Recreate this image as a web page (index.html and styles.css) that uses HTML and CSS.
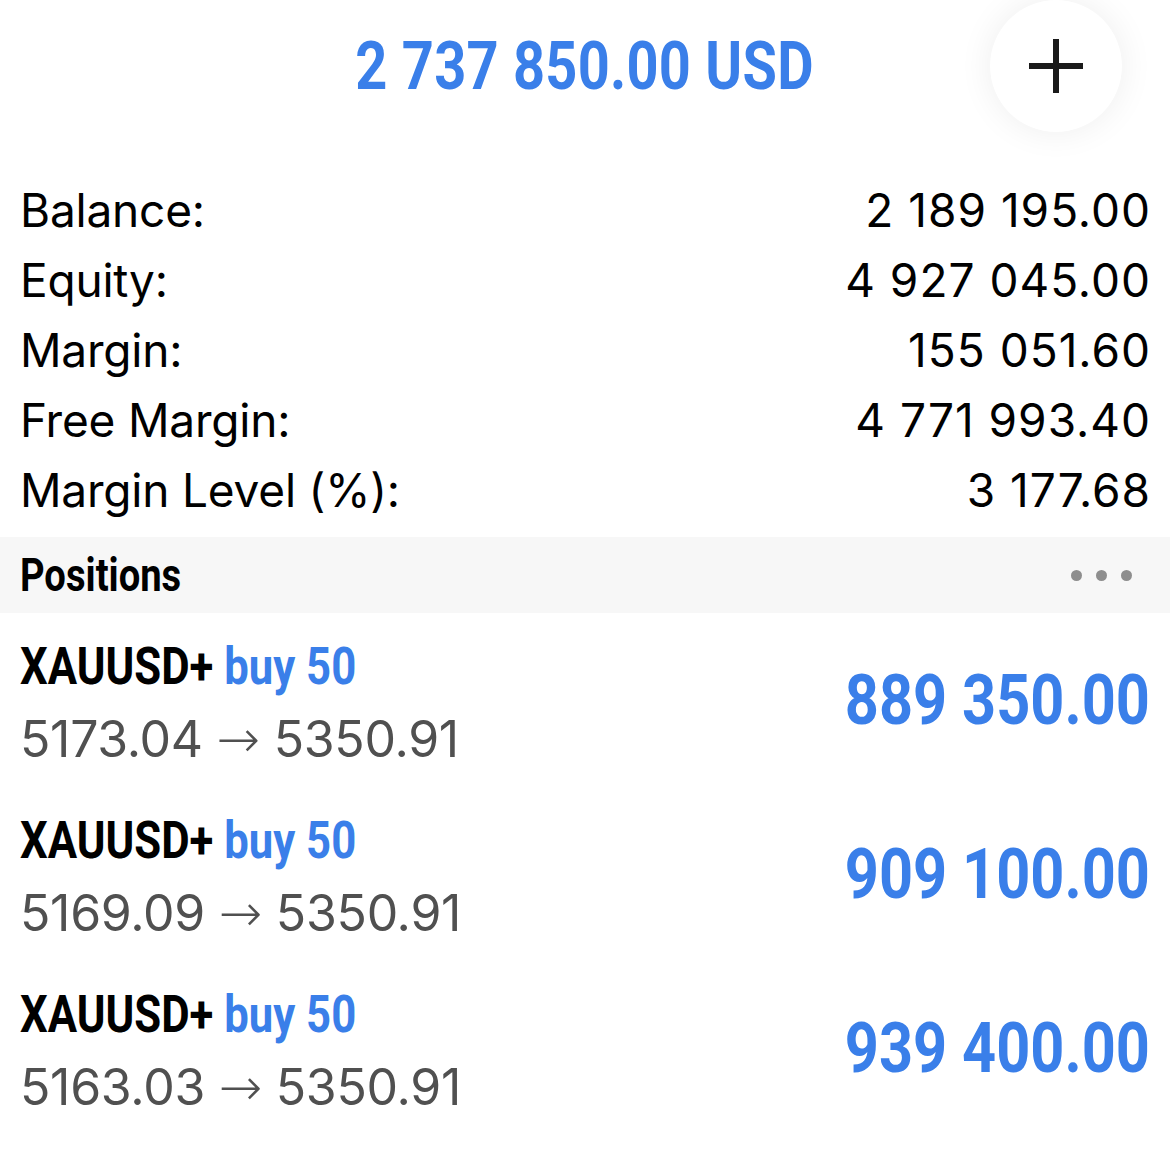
FILE: index.html
```html
<!DOCTYPE html>
<html lang="en">
<head>
<meta charset="utf-8">
<title>Trade</title>
<link rel="stylesheet" href="styles.css">
</head>
<body>
<div class="screen">
  <header class="top">
    <div class="total">2 737 850.00 USD</div>
    <button class="add" aria-label="Add">
      <svg width="54" height="54" viewBox="0 0 54 54"><rect x="24" y="0" width="6" height="54" fill="#1a1a1a"/><rect x="0" y="24" width="54" height="6" fill="#1a1a1a"/></svg>
    </button>
  </header>

  <section class="stats">
    <div class="stat"><span>Balance:</span><span class="num">2 189 195.00</span></div>
    <div class="stat"><span>Equity:</span><span class="num">4 927 045.00</span></div>
    <div class="stat"><span>Margin:</span><span class="num">155 051.60</span></div>
    <div class="stat"><span>Free Margin:</span><span class="num">4 771 993.40</span></div>
    <div class="stat"><span>Margin Level (%):</span><span class="num">3 177.68</span></div>
  </section>

  <div class="bar">
    <span class="bar-title">Positions</span>
    <span class="dots"><i></i><i></i><i></i></span>
  </div>

  <section class="positions">
    <div class="pos">
      <div class="pos-left">
        <div class="sym"><span class="sym-text">XAUUSD+ <span class="side">buy 50</span></span></div>
        <div class="price">5173.04 <span class="arrow">→</span> 5350.91</div>
      </div>
      <div class="profit">889 350.00</div>
    </div>
    <div class="pos">
      <div class="pos-left">
        <div class="sym"><span class="sym-text">XAUUSD+ <span class="side">buy 50</span></span></div>
        <div class="price">5169.09 <span class="arrow">→</span> 5350.91</div>
      </div>
      <div class="profit">909 100.00</div>
    </div>
    <div class="pos">
      <div class="pos-left">
        <div class="sym"><span class="sym-text">XAUUSD+ <span class="side">buy 50</span></span></div>
        <div class="price">5163.03 <span class="arrow">→</span> 5350.91</div>
      </div>
      <div class="profit">939 400.00</div>
    </div>
  </section>
</div>
</body>
</html>
```

FILE: styles.css
```css
* { box-sizing: border-box; }
html, body { margin: 0; padding: 0; background: #fff; }
body { font-family: Inter, "Noto Sans", sans-serif; color: #000; }

.screen { width: 1170px; height: 1159px; overflow: hidden; position: relative; }

.top {
  height: 132px;
  display: flex;
  align-items: center;
  justify-content: center;
  position: relative;
}
.total {
  font-family: Roboto, "Liberation Sans", sans-serif;
  font-weight: 700;
  font-size: 67px;
  line-height: 1;
  color: #3a7fe9;
  letter-spacing: 0.3px;
  display: inline-block;
  transform: scaleX(0.835);
  transform-origin: center;
  white-space: nowrap;
}
.add {
  position: absolute;
  left: 990px;
  top: 0;
  width: 132px;
  height: 132px;
  border: 0;
  padding: 0;
  border-radius: 50%;
  background: #fff;
  box-shadow: 0 0 34px rgba(0,0,0,0.07);
  display: flex;
  align-items: center;
  justify-content: center;
}

.stats { padding: 43px 20px 0; }
.stat {
  height: 70px;
  display: flex;
  align-items: center;
  justify-content: space-between;
  font-size: 46px;
  line-height: 70px;
  letter-spacing: -0.2px;
}
.stat .num { letter-spacing: 1px; margin-right: -1px; }

.bar {
  margin-top: 12px;
  height: 76px;
  background: #f7f7f7;
  display: flex;
  align-items: center;
  justify-content: space-between;
  padding: 0 38px 0 20px;
}
.bar-title {
  font-family: Roboto, "Liberation Sans", sans-serif;
  font-weight: 700;
  font-size: 46px;
  line-height: 1;
  display: inline-block;
  transform: scaleX(0.83);
  transform-origin: left center;
}
.dots { display: flex; gap: 14px; }
.dots i { width: 11px; height: 11px; border-radius: 50%; background: #8e8e8e; display: block; }

.pos {
  height: 174px;
  display: flex;
  align-items: center;
  justify-content: space-between;
  padding: 0 20px;
}
.pos-left { padding-top: 6px; }
.sym {
  font-family: Roboto, "Liberation Sans", sans-serif;
  font-weight: 700;
  font-size: 52px;
  line-height: 72px;
  height: 72px;
  white-space: nowrap;
}
.sym-text {
  display: inline-block;
  transform: scaleX(0.84);
  transform-origin: left center;
}
.side { color: #3a7fe9; }
.price {
  font-size: 50px;
  line-height: 72px;
  height: 72px;
  color: #505050;
  letter-spacing: -0.3px;
  white-space: nowrap;
}
.arrow {
  font-family: "DejaVu Sans", sans-serif;
  font-size: 52px;
  font-weight: 300;
  color: #505050;
}
.profit {
  font-family: Roboto, "Liberation Sans", sans-serif;
  font-weight: 700;
  font-size: 70px;
  line-height: 1;
  color: #3a7fe9;
  display: inline-block;
  transform: scaleX(0.85);
  transform-origin: right center;
  white-space: nowrap;
}
```
